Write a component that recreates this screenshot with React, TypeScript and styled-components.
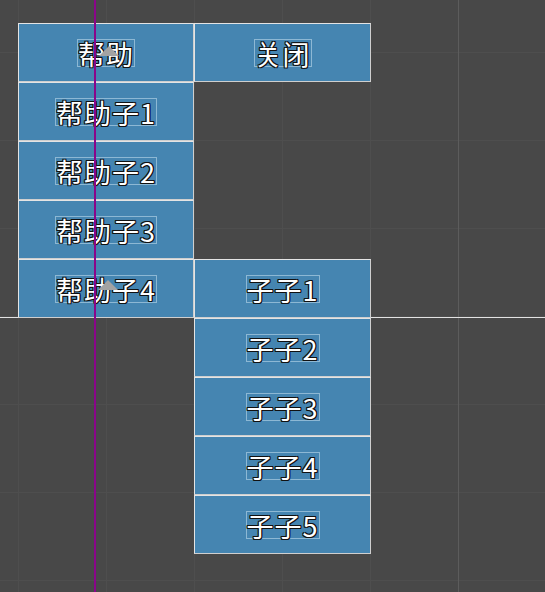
import React from 'react';
import styled, { createGlobalStyle } from 'styled-components';

const GlobalStyle = createGlobalStyle`
  html, body {
    margin: 0;
    padding: 0;
    background: #484848;
  }
`;

type Item = { label: string; col: number; row: number };

const items: Item[] = [
  { label: '帮助', col: 1, row: 1 },
  { label: '帮助子1', col: 1, row: 2 },
  { label: '帮助子2', col: 1, row: 3 },
  { label: '帮助子3', col: 1, row: 4 },
  { label: '帮助子4', col: 1, row: 5 },
  { label: '关闭', col: 2, row: 1 },
  { label: '子子1', col: 2, row: 5 },
  { label: '子子2', col: 2, row: 6 },
  { label: '子子3', col: 2, row: 7 },
  { label: '子子4', col: 2, row: 8 },
  { label: '子子5', col: 2, row: 9 },
];

// pivot gizmos drawn by the editor over the selected buttons
const pivots = [
  { x: 99, y: 46 },
  { x: 98, y: 280 },
];

const App = () => {
  return (
    <>
      <GlobalStyle />
      <Scene>
        <Menu>
          {items.map((item) => (
            <Cell key={item.label} $col={item.col} $row={item.row}>
              <Label>{item.label}</Label>
            </Cell>
          ))}
        </Menu>
        <AxisLine />
        {pivots.map((p, i) => (
          <Pivot
            key={`pivot-${i}`}
            style={{ left: p.x, top: p.y }}
            width="20"
            height="10"
            viewBox="0 0 20 10"
          >
            <polygon points="10,0 20,10 0,10" fill="#a3a3a3" />
          </Pivot>
        ))}
      </Scene>
    </>
  );
};

export default App;

const Scene = styled.div`
  position: relative;
  width: 545px;
  height: 592px;
  overflow: hidden;
  box-sizing: border-box;
  padding: 23px 0 0 18px;
  background-color: #484848;
  background-image:
    linear-gradient(to bottom, transparent 317px, #e2e2e2 317px, #e2e2e2 318px, transparent 318px),
    linear-gradient(to right, transparent 458px, #5c5c5c 458px, #5c5c5c 459px, transparent 459px),
    linear-gradient(to right, #4e4e4e 1px, transparent 1px),
    linear-gradient(to bottom, #4e4e4e 1px, transparent 1px);
  background-size: 100% 100%, 100% 100%, 88px 88px, 88px 88px;
  background-position: 0 0, 0 0, 18px 52px, 18px 52px;
  background-repeat: no-repeat, no-repeat, repeat, repeat;
`;

const Menu = styled.div`
  display: grid;
  grid-template-columns: 176px 177px;
  grid-auto-rows: 59px;
`;

const Cell = styled.div<{ $col: number; $row: number }>`
  grid-column: ${(p) => p.$col};
  grid-row: ${(p) => p.$row};
  box-sizing: border-box;
  display: flex;
  align-items: center;
  justify-content: center;
  background: #4585b1;
  border: 1px solid #cfcfcf;
  border-top-color: #e4e4e4;
  border-left-color: #e4e4e4;
`;

const Label = styled.span`
  display: inline-block;
  box-sizing: border-box;
  height: 28px;
  font-family: 'Noto Sans CJK JP', 'Noto Sans CJK SC', sans-serif;
  font-size: 27px;
  line-height: 27px;
  letter-spacing: 1px;
  color: #ffffff;
  border: 1px solid rgba(200, 225, 240, 0.55);
  text-shadow:
    1px 1px 0 #111,
    -1px -1px 0 #111,
    1px -1px 0 #111,
    -1px 1px 0 #111,
    1px 0 0 #111,
    -1px 0 0 #111;
`;

const AxisLine = styled.div`
  position: absolute;
  top: 0;
  bottom: 0;
  left: 94px;
  width: 2px;
  background: #8a058a;
`;

const Pivot = styled.svg`
  position: absolute;
  display: block;
`;
